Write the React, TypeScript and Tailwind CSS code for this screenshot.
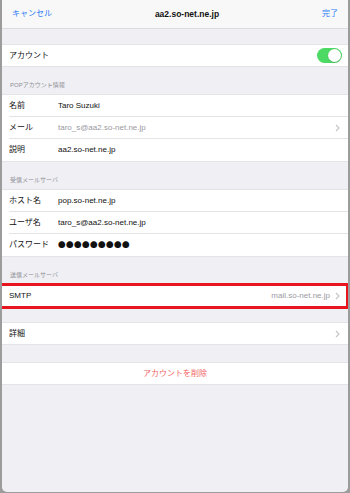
import React from "react";

const font = { fontFamily: '"Liberation Sans", "Noto Sans CJK JP", sans-serif' };

const Chevron = () => (
  <svg width="5" height="8" viewBox="0 0 5 8" className="shrink-0">
    <path d="M1 1 L4 4 L1 7" fill="none" stroke="#c4c4c9" strokeWidth="1.1" />
  </svg>
);

const Row = ({
  label,
  value,
  gray = false,
  chevron = false,
  last = false,
  dots = false,
}: {
  label: string;
  value?: string;
  gray?: boolean;
  chevron?: boolean;
  last?: boolean;
  dots?: boolean;
}) => (
  <div className="flex h-[22px] items-center bg-white pl-[7px]">
    <div
      className={`flex h-full flex-1 items-center pr-[8px] ${last ? "" : "border-b border-[#e4e4e8]"}`}
    >
      <span className="w-[49px] shrink-0 text-[8px] text-[#111]">{label}</span>
      <span
        className={`flex-1 truncate ${dots ? "font-['Noto_Sans_CJK_JP'] text-[7.5px] tracking-[0.5px]" : "text-[8px]"} ${gray ? "text-[#9a9a9f]" : "text-[#111]"}`}
      >
        {value}
      </span>
      {chevron && <Chevron />}
    </div>
  </div>
);

const Header = ({ text }: { text: string }) => (
  <div className="flex h-[28px] items-end border-b border-[#e4e4e8] px-[8px] pb-[4px]">
    <span className="text-[6px] text-[#8e8e93]">{text}</span>
  </div>
);

export default function App() {
  return (
    <div className="h-[493px] w-[350px] overflow-hidden bg-[#9c9c9c]" style={font}>
      <div className="relative mx-[2px] flex h-[492px] flex-col overflow-hidden rounded-b-[5px] bg-[#efeff4]">
        {/* nav */}
        <div className="flex h-[29px] items-center justify-between border-b border-[#dcdce0] bg-[#f8f8f8] px-[10px]">
          <span className="text-[8px] text-[#2f7cf6]">キャンセル</span>
          <span className="text-[8.5px] font-bold text-[#111]">aa2.so-net.ne.jp</span>
          <span className="text-[8px] text-[#2f7cf6]">完了</span>
        </div>

        <div className="h-[16px] border-b border-[#e4e4e8]" />
        <div className="flex h-[22px] items-center justify-between border-b border-[#e4e4e8] bg-white pl-[7px] pr-[6px]">
          <span className="text-[8px] text-[#111]">アカウント</span>
          <div className="flex h-[15px] w-[25px] items-center justify-end rounded-full bg-[#4cd964] pr-[1px]">
            <div className="h-[13px] w-[13px] rounded-full bg-white shadow-[0_0.5px_1px_rgba(0,0,0,0.25)]" />
          </div>
        </div>

        <Header text="POPアカウント情報" />
        <Row label="名前" value="Taro Suzuki" />
        <Row label="メール" value="taro_s@aa2.so-net.ne.jp" gray chevron />
        <Row label="説明" value="aa2.so-net.ne.jp" last />

        <div className="border-t border-[#e4e4e8]">
          <Header text="受信メールサーバ" />
        </div>
        <Row label="ホスト名" value="pop.so-net.ne.jp" />
        <Row label="ユーザ名" value="taro_s@aa2.so-net.ne.jp" />
        <Row label="パスワード" value="●●●●●●●●●" dots last />

        <div className="border-t border-[#e4e4e8]">
          <Header text="送信メールサーバ" />
        </div>
        <div className="relative">
          <div className="flex h-[22px] items-center bg-white pl-[7px] pr-[8px]">
            <span className="flex-1 text-[8px] text-[#111]">SMTP</span>
            <span className="mr-[5px] text-[8px] text-[#9a9a9f]">mail.so-net.ne.jp</span>
            <Chevron />
          </div>
          <div className="pointer-events-none absolute -left-[3px] -right-[1px] -top-[2px] -bottom-[2px] border-[3px] border-[#e8141e]" />
        </div>

        <div className="h-[16px] border-b border-[#e4e4e8]" />
        <div className="flex h-[22px] items-center justify-between border-b border-[#e4e4e8] bg-white pl-[7px] pr-[8px]">
          <span className="text-[8px] text-[#111]">詳細</span>
          <Chevron />
        </div>

        <div className="h-[18px] border-b border-[#e4e4e8]" />
        <div className="flex h-[22px] items-center justify-center border-b border-[#e4e4e8] bg-white">
          <span className="text-[8px] text-[#f06464]">アカウントを削除</span>
        </div>
        <div className="flex-1" />
      </div>
    </div>
  );
}
